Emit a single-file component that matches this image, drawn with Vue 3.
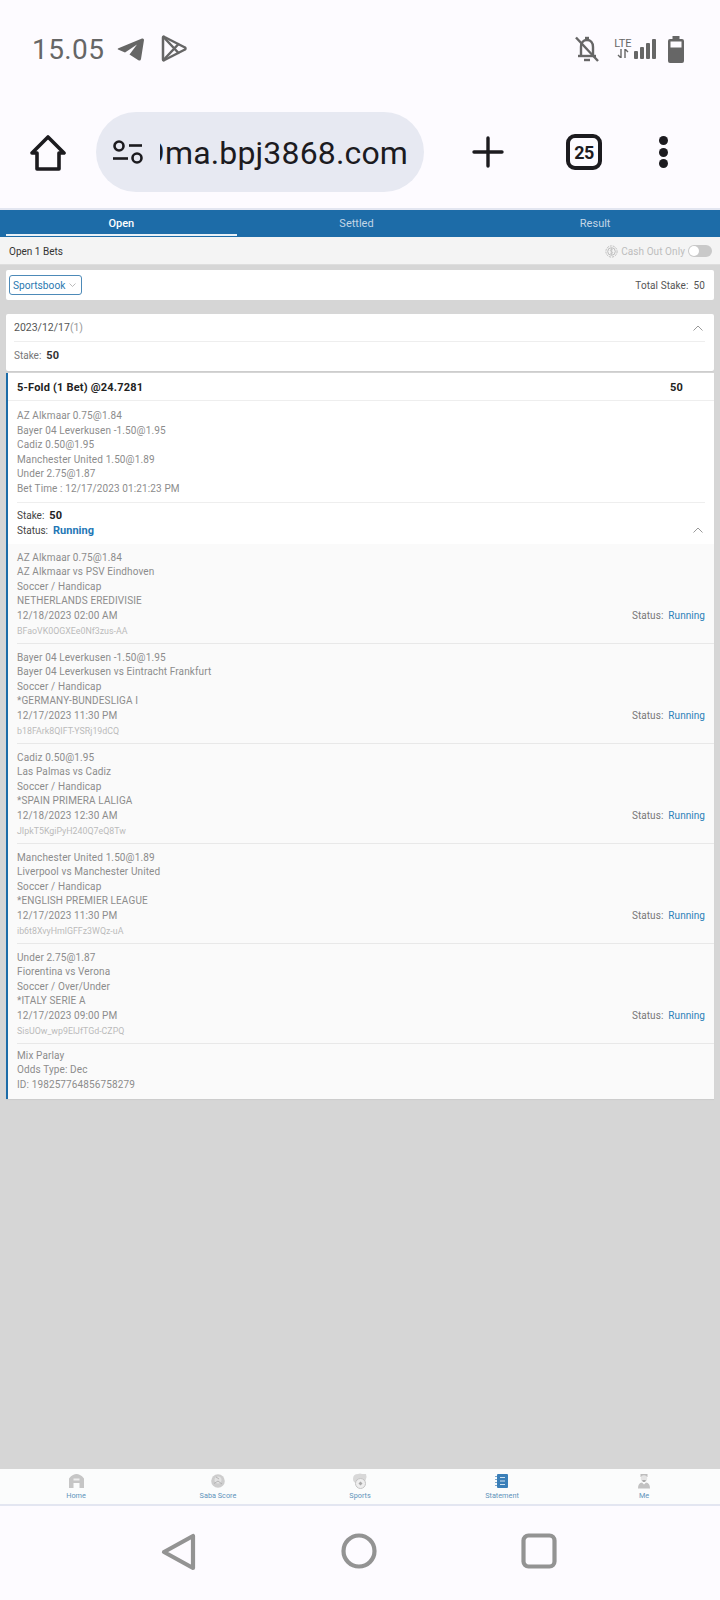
<script setup>
const summary = ['AZ Alkmaar 0.75@1.84','Bayer 04 Leverkusen -1.50@1.95','Cadiz 0.50@1.95','Manchester United 1.50@1.89','Under 2.75@1.87','Bet Time : 12/17/2023 01:21:23 PM']
const legs = [
  { l: ['AZ Alkmaar 0.75@1.84','AZ Alkmaar vs PSV Eindhoven','Soccer / Handicap','NETHERLANDS EREDIVISIE','12/18/2023 02:00 AM'], id: 'BFaoVK0OGXEe0Nf3zus-AA' },
  { l: ['Bayer 04 Leverkusen -1.50@1.95','Bayer 04 Leverkusen vs Eintracht Frankfurt','Soccer / Handicap','*GERMANY-BUNDESLIGA I','12/17/2023 11:30 PM'], id: 'b18FArk8QIFT-YSRj19dCQ' },
  { l: ['Cadiz 0.50@1.95','Las Palmas vs Cadiz','Soccer / Handicap','*SPAIN PRIMERA LALIGA','12/18/2023 12:30 AM'], id: 'JIpkT5KgiPyH240Q7eQ8Tw' },
  { l: ['Manchester United 1.50@1.89','Liverpool vs Manchester United','Soccer / Handicap','*ENGLISH PREMIER LEAGUE','12/17/2023 11:30 PM'], id: 'ib6t8XvyHmlGFFz3WQz-uA' },
  { l: ['Under 2.75@1.87','Fiorentina vs Verona','Soccer / Over/Under','*ITALY SERIE A','12/17/2023 09:00 PM'], id: 'SisUOw_wp9ElJfTGd-CZPQ' },
]
const nav = ['Home','Saba Score','Sports','Statement','Me']
</script>

<template>
  <div class="page">
    <div class="status">
      <div class="st-left">
        <span class="time">15.05</span>
        <svg class="tg" width="27" height="23" viewBox="0 0 27 23"><path d="M1 11.500 Q0 10.500 2 10 L25 .500 Q27 0 27 2 L24 21 Q23.500 23.500 21 22 L12.500 16.500 L20 6.500 L8 14.500 Z" fill="#666"/></svg>
        <svg class="play" width="26" height="27" viewBox="0 0 26 27" fill="none" stroke="#666" stroke-width="2.500" stroke-linejoin="round"><path d="M2 2.500 Q2 1 3.500 2 L24 12.500 Q25 13.500 24 14.500 L3.500 25 Q2 26 2 24.500 Z"/><path d="M2.500 2 L18 18.500 M2.500 25 L18 8.500"/></svg>
      </div>
      <div class="st-right">
        <svg width="24" height="26" viewBox="0 0 24 26" fill="none" stroke="#666" stroke-width="2.400"><path d="M6 19 V11 C6 6.500 8.500 4 12 4 C15.500 4 18 6.500 18 11 V19"/><path d="M3 20 H21" /><path d="M9 24 H15"/><path d="M10 2 H14"/><path d="M1 1.500 L23 25"/></svg>
        <span class="lte"><span class="lte-t">LTE</span><svg width="12" height="9" viewBox="0 0 12 9" fill="none" stroke="#666" stroke-width="1.400"><path d="M4 0 V9 M1 6 L4 9 M8 9 V0 M11 3 L8 0"/></svg></span>
        <svg class="bars" width="22" height="20" viewBox="0 0 22 20" fill="#666"><rect x="0" y="12" width="4" height="8" rx="1"/><rect x="6" y="8" width="4" height="12" rx="1"/><rect x="12" y="4" width="4" height="16" rx="1"/><rect x="18" y="0" width="4" height="20" rx="1"/></svg>
        <svg width="16" height="27" viewBox="0 0 16 27"><path d="M4.500 0 H11.500 V3 H14 Q16 3 16 5 V25 Q16 27 14 27 H2 Q0 27 0 25 V5 Q0 3 2 3 H4.500 Z" fill="#666"/><rect x="2.500" y="5.500" width="11" height="6" fill="#fdfbff"/></svg>
      </div>
    </div>

    <div class="toolbar">
      <svg class="home" width="38" height="36" viewBox="0 0 38 36" fill="none" stroke="#1c1b1f" stroke-width="3.600" stroke-linejoin="round"><path d="M19 2 L35 18 H30 V34 H8 V18 H3 Z"/></svg>
      <div class="url">
        <svg width="30" height="24" viewBox="0 0 30 24" fill="none" stroke="#1c1b1f" stroke-width="2.600"><circle cx="6" cy="6" r="4.500"/><path d="M16 5.500 H29"/><path d="M0 18.500 H15"/><circle cx="24" cy="18" r="4.500"/></svg>
        <div class="url-clip"><span class="url-text">9ma.bpj3868.com</span></div>
      </div>
      <svg class="plus" width="32" height="32" viewBox="0 0 32 32" stroke="#1c1b1f" stroke-width="3.400" stroke-linecap="round"><path d="M16 2 V30 M2 16 H30"/></svg>
      <div class="tabs-count">25</div>
      <div class="dots"><i></i><i></i><i></i></div>
    </div>
    <div class="rule"></div>

    <div class="tabs">
      <div class="tab active">Open</div>
      <div class="tab">Settled</div>
      <div class="tab">Result</div>
    </div>

    <div class="subbar">
      <span>Open 1 Bets</span>
      <div class="cash">
        <svg width="13" height="13" viewBox="0 0 13 13" fill="none" stroke="#bbb"><circle cx="6.500" cy="6.500" r="5.600" stroke-dasharray="2 1"/><circle cx="6.500" cy="6.500" r="3.800"/><path d="M8 5 Q6.500 3.800 5.200 5 Q5 6.500 6.500 6.500 Q8 6.700 7.800 8 Q6.500 9.200 5 8 M6.500 3 V10" stroke-width=".7"/></svg>
        <span class="cash-t">Cash Out Only</span>
        <span class="toggle"><b></b></span>
      </div>
    </div>

    <div class="main">
      <div class="card filter">
        <div class="select">Sportsbook <svg width="7" height="4" viewBox="0 0 7 4" fill="none" stroke="#aaa" stroke-width=".8"><path d="M.5 .5 L3.500 3.500 L6.500 .5"/></svg></div>
        <div class="total">Total Stake:&nbsp; 50</div>
      </div>

      <div class="card date">
        <div class="date-head">
          <span>2023/12/17<em>(1)</em></span>
          <svg width="10" height="6" viewBox="0 0 10 6" fill="none" stroke="#999"><path d="M.5 5.500 L5 1 L9.500 5.500"/></svg>
        </div>
        <div class="date-stake"><span>Stake:</span><b>50</b></div>
      </div>

      <div class="bet">
        <div class="bet-head"><b>5-Fold (1 Bet) @24.7281</b><b class="amt">50</b></div>
        <div class="bet-sum">
          <div v-for="s in summary" :key="s" class="line">{{ s }}</div>
        </div>
        <div class="bet-status">
          <div class="ss-lines">
            <div class="line dark">Stake:<b class="v">50</b></div>
            <div class="line dark">Status:<b class="run">Running</b></div>
          </div>
          <svg class="ss-chev" width="10" height="6" viewBox="0 0 10 6" fill="none" stroke="#999"><path d="M.5 5.500 L5 1 L9.500 5.500"/></svg>
        </div>
        <div class="legs">
          <div v-for="leg in legs" :key="leg.id" class="leg">
            <div class="leg-main">
              <div v-for="t in leg.l" :key="t" class="line">{{ t }}</div>
              <div class="leg-id">{{ leg.id }}</div>
            </div>
            <div class="leg-st">Status:<span>Running</span></div>
          </div>
          <div class="leg last">
            <div class="leg-main">
              <div class="line">Mix Parlay</div>
              <div class="line">Odds Type: Dec</div>
              <div class="line">ID: 198257764856758279</div>
            </div>
          </div>
        </div>
      </div>
    </div>

    <div class="bottom">
      <div v-for="(n, i) in nav" :key="n" class="nav-item">
        <svg v-if="i === 0" width="15" height="14" viewBox="0 0 15 14"><path d="M0 4.500 Q2 1.500 4 1 Q7.500 -1 11 1 Q13 1.500 15 4.500 V14 H10.500 V9 H4.500 V14 H0 Z" fill="#c6c6c6"/><rect x="4.500" y="4.500" width="6" height="2" fill="#eee"/></svg>
        <svg v-else-if="i === 1" width="14" height="14" viewBox="0 0 14 14"><circle cx="7" cy="7" r="6.800" fill="#cdcdcd"/><circle cx="7" cy="6" r="3.500" fill="#e2e2e2"/><path d="M3 9.500 L7 7 L11 10 M5 3 L8 5" stroke="#aaa" stroke-width=".8" fill="none"/></svg>
        <svg v-else-if="i === 2" width="16" height="16" viewBox="0 0 16 16" fill="none"><path d="M1 6 Q1 1 6 1 Q8 0 10 1 L14 1 Q15 4 14 6 L13 9 L4 10 Q1 9 1 6 Z" fill="#d8d8d8"/><circle cx="8.500" cy="10.500" r="5" fill="#eee" stroke="#c4c4c4"/><path d="M8.500 8.500 L10.500 10.500 L8.500 12.500 L6.500 10.500 Z" fill="#aaa"/></svg>
        <svg v-else-if="i === 3" width="14" height="14" viewBox="0 0 14 14"><rect x="2" y="0" width="11" height="14" rx="1" fill="#3a7fb8"/><path d="M5 3.500 H10 M5 7 H10 M5 10.500 H10" stroke="#cfe2f0" stroke-width="1.200"/><path d="M0 2.500 H2 M0 5.500 H2 M0 8.500 H2 M0 11.500 H2" stroke="#7fa9cc"/></svg>
        <svg v-else width="12" height="16" viewBox="0 0 12 16"><path d="M2.500 1 H9.500 V4 H2.500 Z" fill="#bdbdbd"/><circle cx="6" cy="5.500" r="3.200" fill="#e4e4e4"/><path d="M4 7 H8 L7 9 H5 Z" fill="#aaa"/><path d="M0 15.500 Q0 10 4 9.500 L6 11.500 L8 9.500 Q12 10 12 15.500 Z" fill="#c2c2c2"/></svg>
        <span>{{ n }}</span>
      </div>
    </div>
    <div class="rule2"></div>

    <div class="sysnav">
      <svg width="36" height="38" viewBox="0 0 36 38" fill="none" stroke="#939393" stroke-width="4.200" stroke-linejoin="round"><path d="M32 3 V35 L3 19 Z"/></svg>
      <svg width="36" height="36" viewBox="0 0 36 36" fill="none" stroke="#939393" stroke-width="4.200"><circle cx="18" cy="18" r="15.500"/></svg>
      <svg width="36" height="36" viewBox="0 0 36 36" fill="none" stroke="#939393" stroke-width="4.200"><rect x="2.500" y="2.500" width="31" height="31" rx="5"/></svg>
    </div>
  </div>
</template>

<style>
body { margin: 0; }
</style>

<style scoped>
.page { width: 720px; height: 1600px; display: flex; flex-direction: column; background: #d6d6d6; font-family: Roboto, "Liberation Sans", sans-serif; overflow: hidden; }
.status { height: 96px; flex: none; background: #fdfbff; display: flex; justify-content: space-between; align-items: flex-start; padding: 32px 36px 0 32px; box-sizing: border-box; }
.st-left { display: flex; align-items: center; height: 34px; }
.time { font-size: 28px; color: #666; letter-spacing: .4px; margin-right: 13px; }
.play { margin-left: 17px; margin-top: -2px; }
.st-right { display: flex; align-items: center; height: 34px; }
.lte { display: flex; flex-direction: column; align-items: center; margin-left: 15px; width: 18px; height: 21px; margin-top: -1px; }
.lte-t { font-size: 11px; line-height: 11px; color: #666; }
.bars { margin: 0 12px 0 2px; }
.toolbar { height: 112px; flex: none; background: #fdfbff; display: flex; align-items: flex-start; box-sizing: border-box; padding-top: 16px; }
.home { margin: 23px 0 0 29px; flex: none; }
.url { margin-left: 29px; width: 328px; height: 80px; border-radius: 40px; background: #e7e9f2; display: flex; align-items: center; padding-left: 17px; box-sizing: border-box; flex: none; }
.url-clip { flex: 1; min-width: 0; overflow: hidden; margin-left: 17px; margin-right: 16px; display: flex; justify-content: flex-end; }
.url-text { font-size: 32px; color: #1c1b1f; white-space: nowrap; letter-spacing: .15px; margin-top: 1px; flex: none; }
.plus { margin: 24px 0 0 48px; flex: none; }
.tabs-count { margin: 22px 0 0 62px; width: 36px; height: 36px; border: 4px solid #1c1b1f; border-radius: 9px; font-size: 18px; font-weight: 700; letter-spacing: -.5px; color: #1c1b1f; display: flex; align-items: center; justify-content: center; flex: none; box-sizing: border-box; }
.dots { margin: 24px 0 0 57px; display: flex; flex-direction: column; gap: 2.500px; }
.dots i { display: block; width: 9px; height: 9px; border-radius: 50%; background: #1c1b1f; }
.rule { height: 2px; flex: none; background: #e3e6f1; }
.tabs { height: 27px; flex: none; background: #1d6ca8; display: flex; padding: 0 6px; box-sizing: border-box; }
.tab { text-align: center; font-size: 11px; line-height: 27px; color: #c3d6e6; box-sizing: border-box; }
.tab.active { width: 231px; color: #fff; border-bottom: 2px solid #e9f1f7; font-weight: 500; height: 26px; }
.tab:nth-child(2) { width: 240px; }
.tab:nth-child(3) { width: 238px; }
.subbar { height: 28px; flex: none; background: #f4f4f4; display: flex; justify-content: space-between; align-items: center; padding: 1px 8px 0 9px; font-size: 10px; color: #333; border-bottom: 1px solid #dedede; box-sizing: border-box; }
.cash { display: flex; align-items: center; color: #bdbdbd; gap: 3px; }
.cash-t { letter-spacing: .08px; }
.toggle { width: 24px; height: 12px; border-radius: 6px; background: #c9c9c9; position: relative; }
.toggle b { position: absolute; left: 1px; top: 1px; width: 10px; height: 10px; border-radius: 50%; background: #fff; }
.main { flex: 1; display: flex; flex-direction: column; padding: 5px 6px 0; min-height: 0; }
.card { background: #fff; border-radius: 2px; box-sizing: border-box; }
.filter { height: 30px; display: flex; justify-content: space-between; align-items: center; padding: 0 9px 0 3px; }
.select { height: 20px; width: 73px; box-sizing: border-box; border: 1px solid #4d8ab8; border-radius: 3px; color: #2a79b0; font-size: 10.200px; display: flex; align-items: center; gap: 4px; padding-left: 3px; white-space: nowrap; }
.total { font-size: 10px; color: #555; letter-spacing: .08px; }
.date { margin-top: 14px; height: 57px; padding: 0 9px 0 8px; box-shadow: 0 1px 1px #ccc; }
.date-head { height: 27px; display: flex; justify-content: space-between; align-items: center; border-bottom: 1px solid #eee; font-size: 10.500px; color: #555; padding-right: 2px; }
.date-head em { font-style: normal; color: #999; }
.date-stake { height: 27px; display: flex; align-items: center; font-size: 10px; color: #777; gap: 5px; box-sizing: border-box; }
.date-stake b { font-size: 11px; color: #333; font-weight: 700; }
.bet { margin-top: 2px; background: #fff; border-left: 2px solid #1d6ca8; box-shadow: 0 1px 1px #ccc; }
.bet-head { height: 28px; box-sizing: border-box; padding: 1px 31px 0 9px; display: flex; justify-content: space-between; align-items: center; font-size: 11px; color: #222; border-bottom: 1px solid #eee; }
.bet-head b { font-weight: 700; letter-spacing: .2px; }
.line { height: 14.600px; line-height: 14.600px; font-size: 10px; color: #8c8c8c; white-space: nowrap; letter-spacing: .12px; }
.bet-sum { margin: 0 9px; padding: 8px 0 5px; border-bottom: 1px solid #eee; }
.bet-status { height: 41px; margin: 0 9px; padding: 1px 2px 0 0; box-sizing: border-box; display: flex; justify-content: space-between; align-items: center; }
.ss-chev { margin-top: 13px; }
.line.dark { color: #444; letter-spacing: 0; }
.v { font-size: 11px; color: #222; margin-left: 5px; letter-spacing: .2px; }
.run { font-size: 11px; color: #1f77b6; margin-left: 5px; }
.legs { background: #fafafa; }
.leg { height: 100px; box-sizing: border-box; margin: 0 0 0 9px; padding: 7px 9px 0 0; border-bottom: 1px solid #e8e8e8; display: flex; justify-content: space-between; }
.leg.last { height: 55px; border: 0; padding-top: 5px; }
.leg-id { font-size: 8.830px; height: 15px; line-height: 15px; color: #bbb; }
.leg-st { align-self: flex-start; margin-top: 58px; font-size: 10px; line-height: 14px; color: #777; letter-spacing: .05px; }
.leg-st span { color: #2a7fb8; margin-left: 5px; }
.bottom { height: 35px; flex: none; background: #fbfcfc; display: flex; padding: 0 5px; box-sizing: border-box; }
.nav-item { flex: 1; display: flex; flex-direction: column; align-items: center; font-size: 7.300px; color: #5f94bb; padding-top: 4px; box-sizing: border-box; }
.nav-item svg { height: 16px; }
.nav-item span { margin-top: 2px; line-height: 9px; }
.rule2 { height: 2px; flex: none; background: #e3e6f1; }
.sysnav { height: 94px; flex: none; background: #fdfbff; display: flex; align-items: flex-start; padding: 27px 0 0 161px; gap: 144px; box-sizing: border-box; }
</style>
